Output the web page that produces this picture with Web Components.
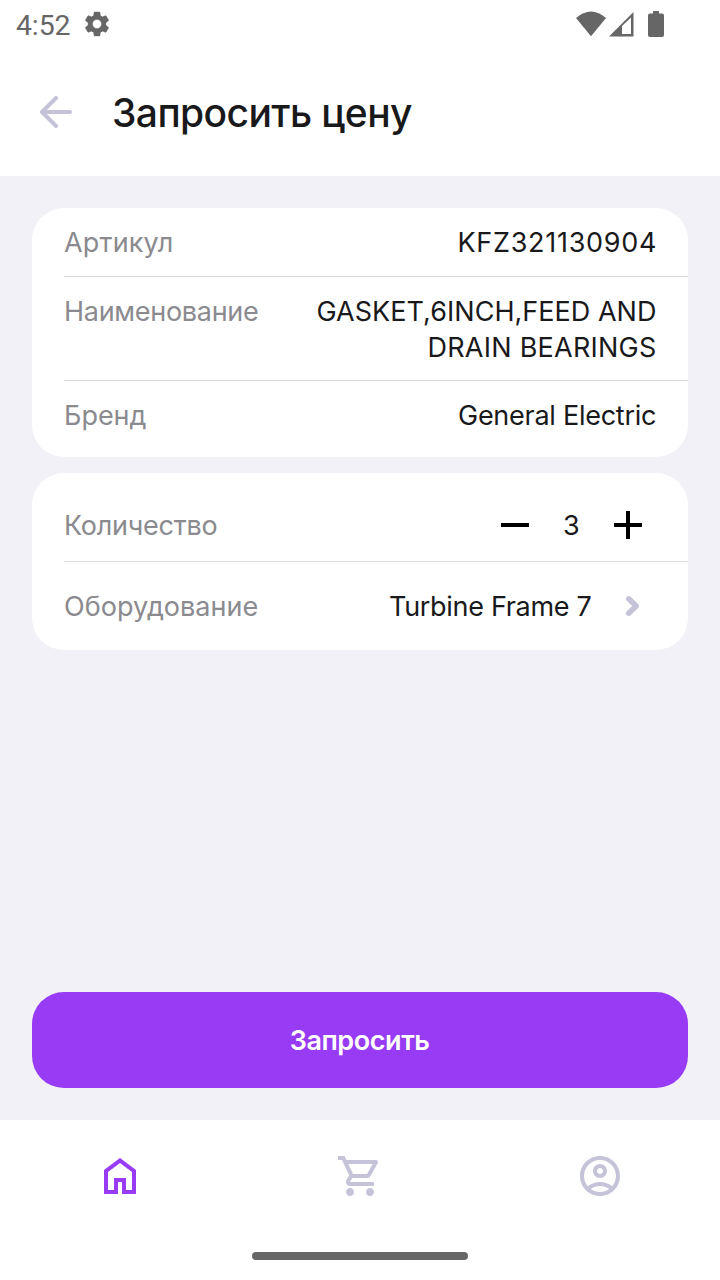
<!DOCTYPE html>
<html lang="ru">
<head>
<meta charset="utf-8">
<title>Запросить цену</title>
<style>
html, body { margin: 0; height: 100%; }
body { background: #f2f1f8; font-family: Inter, "Noto Sans", sans-serif; font-size: 27px; color: #19191b; overflow: hidden; }
</style>
</head>
<body>
<price-request></price-request>
<script>
const define = (name, html, setup) => {
  const template = document.createElement('template');
  template.innerHTML = html;
  customElements.define(name, class extends HTMLElement {
    constructor() {
      super();
      this.attachShadow({ mode: 'open' }).append(template.content.cloneNode(true));
    }
    connectedCallback() { if (setup) setup(this, this.shadowRoot); }
  });
};

// A single line of text whose tracking is adjusted so its glyphs span `width` pixels.
define('tracked-text', `
<style>
:host { display: block; flex: none; line-height: 36px; white-space: nowrap; }
span { display: block; padding-top: 1px; margin-bottom: -1px; }
</style><span><slot></slot></span>`, (host, root) => {
  const style = getComputedStyle(host);
  const ctx = document.createElement('canvas').getContext('2d');
  ctx.font = `${style.fontWeight} ${style.fontSize} ${style.fontFamily}`;
  const text = host.textContent;
  const width = Number(host.getAttribute('width'));
  const m = ctx.measureText(text);
  const ink = m.actualBoundingBoxLeft + m.actualBoundingBoxRight;
  host.style.width = width + 'px';
  const span = root.querySelector('span');
  span.style.marginLeft = m.actualBoundingBoxLeft + 'px';
  if (text.length > 1) span.style.letterSpacing = (width - ink) / (text.length - 1) + 'px';
});

define('status-bar', `
<style>
:host { display: flex; align-items: center; height: 48px; box-sizing: border-box; padding: 0 56px 0 16px; background: #fff; color: #666; font: 28.5px Roboto, sans-serif; }
tracked-text { margin-top: 2px; }
svg { display: block; fill: currentColor; flex: none; }
.gear { margin-left: 12px; }
.signals { margin-left: auto; }
</style>
<tracked-text width="53.5">4:52</tracked-text>
<svg class="gear" width="30" height="30" viewBox="0 0 24 24"><path d="M19.14 12.94c.04-.3.06-.61.06-.94 0-.32-.02-.64-.07-.94l2.03-1.58c.18-.14.23-.41.12-.61l-1.92-3.32c-.12-.22-.37-.29-.59-.22l-2.39.96c-.5-.38-1.03-.7-1.62-.94L14.4 2.81c-.04-.24-.24-.41-.48-.41h-3.84c-.24 0-.43.17-.47.41l-.36 2.54c-.59.24-1.13.57-1.62.94l-2.39-.96c-.22-.08-.47 0-.59.22L2.74 8.87c-.12.21-.08.47.12.61l2.03 1.58c-.05.3-.09.63-.09.94s.02.64.07.94l-2.03 1.58c-.18.14-.23.41-.12.61l1.92 3.32c.12.22.37.29.59.22l2.39-.96c.5.38 1.03.7 1.62.94l.36 2.54c.05.24.24.41.48.41h3.84c.24 0 .44-.17.47-.41l.36-2.54c.59-.24 1.13-.56 1.62-.94l2.39.96c.22.08.47 0 .59-.22l1.92-3.32c.12-.22.07-.47-.12-.61l-2.01-1.58zM12 15.6c-1.98 0-3.6-1.62-3.6-3.6s1.62-3.6 3.6-3.6 3.6 1.62 3.6 3.6-1.62 3.6-3.6 3.6z" stroke="currentColor" stroke-width=".3"/></svg>
<svg class="signals" width="88" height="48" viewBox="576 0 88 48">
<path d="M576 18Q591 5 606 18L591 36.300Z"/>
<path fill-rule="evenodd" d="M609 36.500L633.500 12V36.500ZM622 26V34H631V17.500Z"/>
<path d="M653 11h6v2.500h3q2 0 2 2v19.500q0 2-2 2h-12q-2 0-2-2v-19.500q0-2 2-2h3z"/>
</svg>`);

define('page-header', `
<style>
:host { display: flex; align-items: center; height: 128px; padding: 0 0 0 40px; gap: 42px; background: #fff; font-size: 39px; font-weight: 550; }
tracked-text { margin-top: -1px; }
svg { display: block; fill: none; stroke: #c4c3d8; stroke-width: 4; stroke-linecap: round; stroke-linejoin: round; }
</style>
<svg width="32" height="32"><path d="M30 16H2M16 2L2 16L16 30"/></svg>
<tracked-text width="298">Запросить цену</tracked-text>`);

define('info-card', `
<style>:host { display: flex; flex-direction: column; background: #fff; border-radius: 32px; overflow: hidden; padding-left: 32px; }</style>
<slot></slot>`);

define('info-row', `
<style>
:host { display: flex; justify-content: space-between; align-items: flex-start; box-sizing: border-box; padding: 16px 32px 15px 1px; border-bottom: 1px solid #dcdcde; }
:host([last]) { border-bottom: 0; }
.label { color: #8a8a8f; }
.value { display: flex; flex-direction: column; align-items: flex-end; }
</style>
<div class="label"><slot name="label"></slot></div>
<div class="value"><slot></slot></div>`);

define('quantity-stepper', `
<style>
:host { display: flex; align-items: center; height: 36px; margin-right: 14px; }
svg { display: block; fill: #000; }
tracked-text { margin: 0 36px 0 35px; }
</style>
<svg width="28" height="36"><path d="M0 16h28v4H0z"/></svg>
<tracked-text width="14">3</tracked-text>
<svg width="28" height="36"><path d="M0 16h12V4h4v12h12v4H16v12h-4V20H0z"/></svg>`);

define('picker-value', `
<style>
:host { display: flex; align-items: center; gap: 34.500px; margin-right: 16px; }
svg { display: block; fill: none; stroke: #c4c3d8; stroke-width: 5.500; stroke-linecap: round; stroke-linejoin: round; }
</style>
<slot></slot>
<svg width="15" height="36"><path d="M3.700 10.800L11.200 18L3.700 25.200"/></svg>`);

define('primary-button', `
<style>
:host { display: block; }
button { display: flex; align-items: center; justify-content: center; width: 100%; height: 96px; border: 0; padding: 0; border-radius: 32px; background: #983bf5; color: #fff; font: inherit; font-weight: 570; }
</style><button><slot></slot></button>`);

define('tab-bar', `
<style>
:host { display: grid; grid-template: 112px 48px / repeat(3, 1fr); justify-items: center; align-items: center; background: #fff; }
svg { display: block; fill: #c4c3d8; }
.active { fill: #983bf5; }
.handle { grid-column: 1 / -1; width: 216px; height: 8px; border-radius: 4px; background: #666; align-self: start; margin-top: 20px; }
</style>
<svg class="active" width="48" height="48"><path fill-rule="evenodd" d="M24 6L40 18V42H26V30H22V42H8V18ZM24 11L12 20V38H18V26H30V38H36V20Z"/></svg>
<svg width="48" height="48" viewBox="0 0 24 24"><path d="M15.550 13c.75 0 1.410-.41 1.750-1.030l3.580-6.490A.996.996 0 0 0 20.010 4H5.210l-.94-2H1v2h2l3.600 7.590-1.350 2.440C4.520 15.370 5.480 17 7 17h12v-2H7l1.100-2h7.450zM6.160 6h12.150l-2.760 5H8.530L6.160 6zM7 18c-1.100 0-1.990.9-1.990 2S5.900 22 7 22s2-.9 2-2-.9-2-2-2zm10 0c-1.100 0-1.990.9-1.990 2s.89 2 1.990 2 2-.9 2-2-.9-2-2-2z"/></svg>
<svg width="48" height="48" viewBox="0 0 24 24"><path d="M12 2C6.480 2 2 6.480 2 12s4.480 10 10 10 10-4.480 10-10S17.520 2 12 2zM7.350 18.500C8.660 17.560 10.260 17 12 17s3.340.56 4.650 1.500C15.340 19.440 13.740 20 12 20s-3.340-.56-4.650-1.500zm10.790-1.380C16.450 15.800 14.320 15 12 15s-4.450.8-6.140 2.120C4.700 15.730 4 13.950 4 12c0-4.420 3.580-8 8-8s8 3.580 8 8c0 1.950-.7 3.730-1.860 5.120z"/><path d="M12 6c-1.930 0-3.500 1.570-3.500 3.500S10.070 13 12 13s3.500-1.570 3.500-3.500S13.930 6 12 6zm0 5c-.83 0-1.500-.67-1.500-1.500S11.170 8 12 8s1.500.67 1.500 1.500S12.830 11 12 11z"/></svg>
<div class="handle"></div>`);

define('price-request', `
<style>
:host { display: flex; flex-direction: column; width: 720px; height: 1280px; background: #f2f1f8; }
main { flex: 1; display: flex; flex-direction: column; gap: 16px; padding: 32px; }
primary-button { margin-top: auto; }
.article { padding-bottom: 16px; }
.article [slot] { margin-left: -1px; }
.article :not([slot]), .name :not([slot]) { margin-right: 1px; }
.name [slot], .brand [slot], .quantity [slot] { margin-left: 1px; }
.brand { padding-bottom: 24px; }
.quantity { padding-top: 34px; padding-bottom: 18px; }
.equipment { padding-top: 26px; padding-bottom: 26px; }
</style>
<status-bar></status-bar>
<page-header></page-header>
<main>
<info-card>
<info-row class="article"><tracked-text slot="label" width="107.7">Артикул</tracked-text><tracked-text width="195.5">KFZ321130904</tracked-text></info-row>
<info-row class="name"><tracked-text slot="label" width="192">Наименование</tracked-text><tracked-text width="337.5">GASKET,6INCH,FEED AND</tracked-text><tracked-text width="225.5">DRAIN BEARINGS</tracked-text></info-row>
<info-row class="brand" last><tracked-text slot="label" width="79.5">Бренд</tracked-text><tracked-text width="197">General Electric</tracked-text></info-row>
</info-card>
<info-card>
<info-row class="quantity"><tracked-text slot="label" width="150.5">Количество</tracked-text><quantity-stepper></quantity-stepper></info-row>
<info-row class="equipment" last><tracked-text slot="label" width="192.5">Оборудование</tracked-text><picker-value><tracked-text width="200.5">Turbine Frame 7</tracked-text></picker-value></info-row>
</info-card>
<primary-button><tracked-text width="138.7">Запросить</tracked-text></primary-button>
</main>
<tab-bar></tab-bar>`);
</script>
</body>
</html>
